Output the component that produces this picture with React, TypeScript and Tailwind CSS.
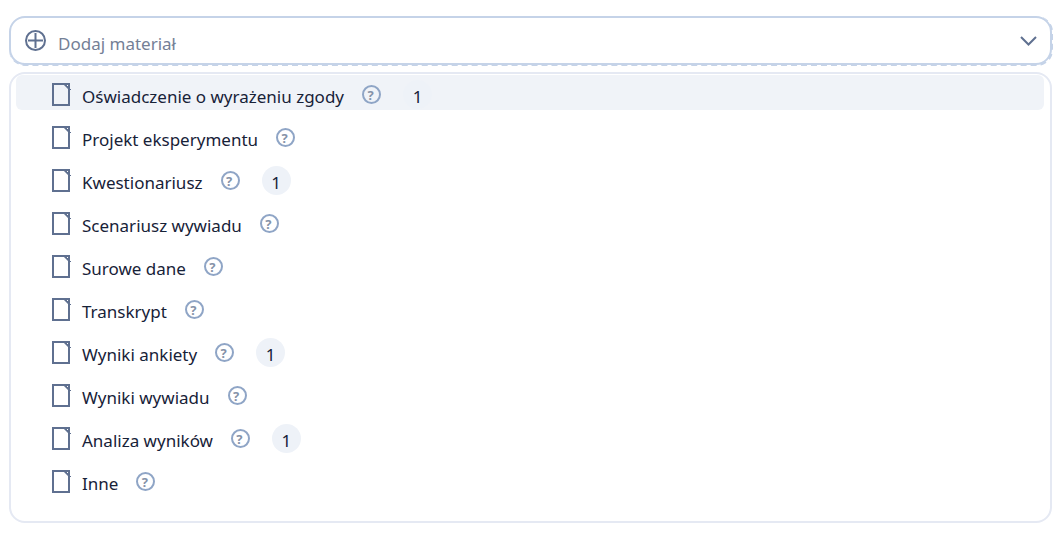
import React, { useState } from 'react'

interface Material {
  name: string
  count?: number
}

const MATERIALS: Material[] = [
  { name: 'Oświadczenie o wyrażeniu zgody', count: 1 },
  { name: 'Projekt eksperymentu' },
  { name: 'Kwestionariusz', count: 1 },
  { name: 'Scenariusz wywiadu' },
  { name: 'Surowe dane' },
  { name: 'Transkrypt' },
  { name: 'Wyniki ankiety', count: 1 },
  { name: 'Wyniki wywiadu' },
  { name: 'Analiza wyników', count: 1 },
  { name: 'Inne' },
]

const PlusIcon = () => (
  <svg className="w-[21px] h-[21px] shrink-0" viewBox="0 0 21 21" fill="none" stroke="#5f7090" strokeWidth="2" aria-hidden="true">
    <circle cx="10.5" cy="10.5" r="9.5" />
    <path d="M10.5 3v15M3 10.5h15" />
  </svg>
)

const ChevronIcon = () => (
  <svg className="w-[17px] h-[10px] shrink-0" viewBox="0 0 17 10" fill="none" stroke="#5f7090" strokeWidth="2" aria-hidden="true">
    <path d="M1 1l7.5 7.5L16 1" />
  </svg>
)

const FileIcon = () => (
  <svg className="w-[19px] h-[23px] shrink-0" viewBox="0 0 19 23" aria-hidden="true">
    <path d="M1 1h16v21H1z" fill="none" stroke="#5f7090" strokeWidth="2" />
    <path d="M11 1h7v5h1v1h-2z" fill="#5f7090" />
    <path d="M15 2h1v1h-1z" fill="#fff" />
  </svg>
)

interface MaterialRowProps {
  material: Material
  active: boolean
  onHover: () => void
}

const MaterialRow: React.FC<MaterialRowProps> = ({ material, active, onHover }: MaterialRowProps) => {
  return (
    <li
      onMouseEnter={onHover}
      className={`flex items-center h-[35px] pt-1 pl-9 rounded-md ${active ? 'bg-[#f0f3f8]' : ''}`}
    >
      <button type="button" className="flex items-center gap-[11px] cursor-pointer">
        <FileIcon />
        <span className="pt-1 leading-6">{material.name}</span>
      </button>
      <button
        type="button"
        aria-label={`Pomoc: ${material.name}`}
        className="ml-[18px] w-[19px] h-[19px] shrink-0 flex items-center justify-center pr-0.5 rounded-full border-2 border-[#8fa5c6] text-[13px] leading-3 font-bold text-[#8592a8] cursor-pointer"
      >
        ?
      </button>
      {material.count !== undefined && (
        <span className="ml-[22px] w-[29px] h-[29px] shrink-0 flex items-center justify-center pt-1 rounded-full bg-[#eef2f8]">
          {material.count}
        </span>
      )}
    </li>
  )
}

const App: React.FC = () => {
  const [open, setOpen] = useState(true)
  const [active, setActive] = useState(0)

  return (
    <main className="pt-4 pl-[9px] pr-[7px] pb-4 bg-white font-['Noto_Sans',sans-serif] text-[17px] text-[#172238]">
      <div className="flex rounded-2xl border-r-2 border-b-2 border-dashed border-[#c5d3e8]">
        <button
          type="button"
          aria-expanded={open}
          aria-controls="materials"
          onClick={() => setOpen(!open)}
          className="flex items-center flex-1 h-[49px] -mr-px -mb-px pl-3.5 pr-[13px] rounded-2xl border-2 border-solid border-[#c5d3e8] bg-white text-[#748096] cursor-pointer"
        >
          <PlusIcon />
          <span className="ml-3 pt-1.5 flex-1 text-left leading-6">Dodaj materiał</span>
          <ChevronIcon />
        </button>
      </div>

      {open && (
        <ul
          id="materials"
          className="mt-1.5 mr-px flex flex-col gap-2 pt-px pl-[5px] pr-1.5 pb-6 rounded-2xl border-2 border-[#e5e9f3]"
        >
          {MATERIALS.map((material, i) => (
            <MaterialRow
              key={material.name}
              material={material}
              active={i === active}
              onHover={() => setActive(i)}
            />
          ))}
        </ul>
      )}
    </main>
  )
}

export default App
